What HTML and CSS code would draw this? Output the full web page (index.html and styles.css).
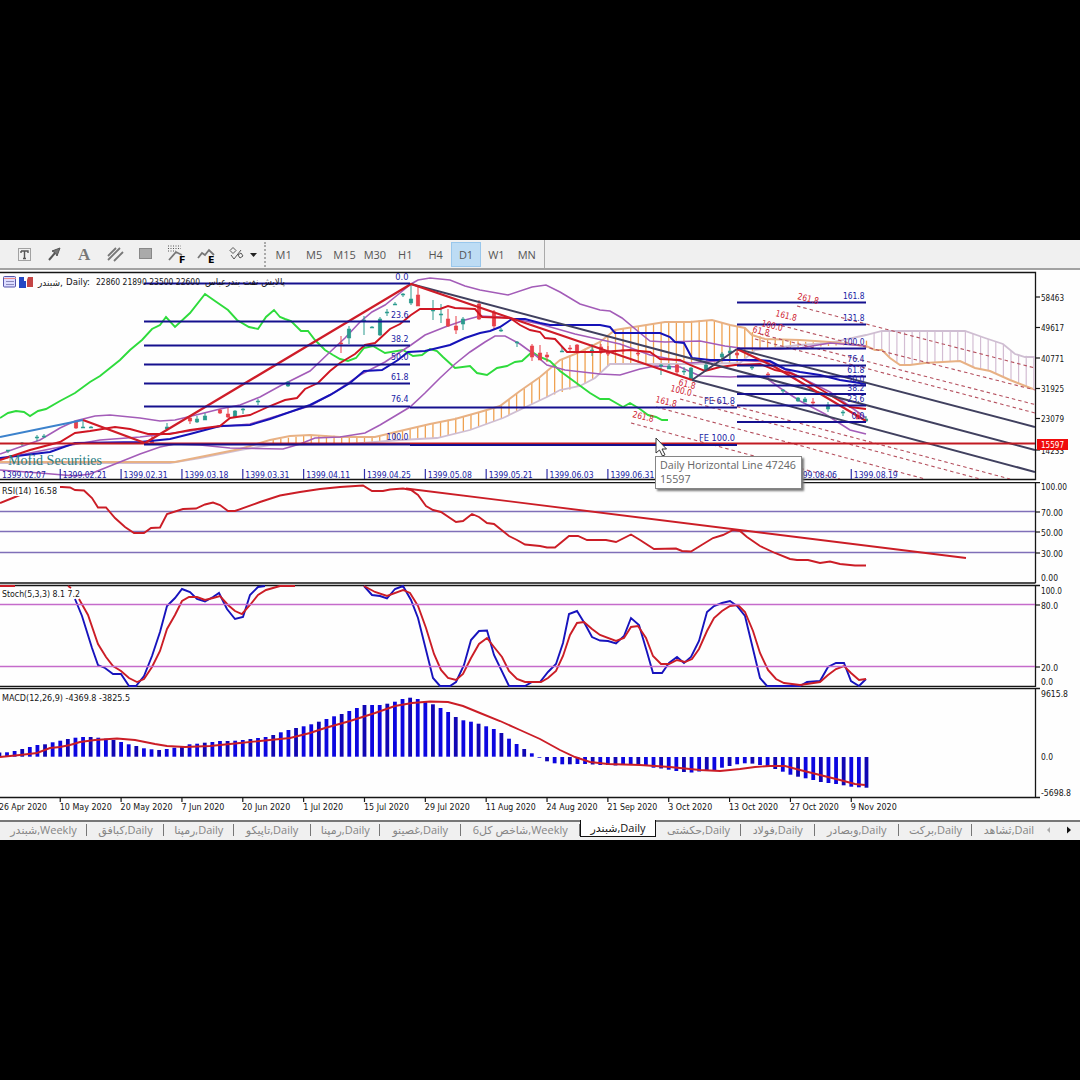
FILE: index.html
```html
<!DOCTYPE html>
<html lang="en">
<head>
<meta charset="utf-8">
<title>Daily chart</title>
<link rel="stylesheet" href="styles.css">
</head>
<body>
<main class="terminal">
  <header class="toolbar">
    <svg class="tools" viewBox="0 240 262 28">
      <g class="icon">
        <rect x="18.5" y="248.500" width="12" height="12" stroke-dasharray="1 1"/>
        <path d="M21 251h7v2M21 251v2M24.500 251v7M23 258.500h3" stroke-width="1.400"/>
        <path d="M49 260l6-7" stroke-width="2"/><path d="M52 251l8-3-3 8-1.500-3z" fill="#777"/>
        <path d="M108 256l8-8M108 260l12-12M114 261l9-9" stroke-width="1.800" stroke="#777"/>
        <rect x="139.500" y="248.500" width="12" height="10" fill="#aaa" stroke="#888"/>
        <path d="M168 246h13M168 248.500h13M168 251h8" stroke-dasharray="1 1.500"/>
        <path d="M169 260l7-8 6 3M198 258l4-5 3 2 4-5 5 5" stroke-width="1.800" stroke="#777"/>
        <path d="M230 250.500l3-3 3 3-3 3zM238 255l3-2 2 3-3 2zM231 255l3 4 7-9"/>
        <path d="M250 253h7l-3.500 4z" fill="#222" stroke="none"/>
      </g>
      <text class="serif-icon" x="78" y="260">A</text>
      <text class="icon-letter" x="179" y="263">F</text>
      <text class="icon-letter" x="208" y="263">E</text>
    </svg>
    <span class="grip"></span>
    <nav class="frames">
      <button>M1</button><button>M5</button><button>M15</button><button>M30</button><button>H1</button><button>H4</button><button class="on">D1</button><button>W1</button><button>MN</button>
    </nav>
  </header>

  <section class="charts">
    <svg class="panel" id="price" viewBox="0 270 1080 212">
      <defs><clipPath id="area"><rect x="0" y="273" width="1035" height="206"/></clipPath></defs>
      <path class="frame" d="M0 272.500H1035.500V479.500H0"/>
      <g clip-path="url(#area)">
        <g id="cloud"></g>
        <path class="span-b" d="M0 463L170 463L200 458L240 450L270 445L350 444L400 440L437 438L470 430L503 418L530 405L547 397L560 390L580 386L595 378L610 364L690 364L740 363L755 350L800 345L830 343L866 335L882 331L965 331L985 338L1003 344L1015 354L1025 357L1035 357"/>
        <path class="span-a" d="M0 462L175 462L200 457L240 449L270 440L290 436L310 435L340 437L375 437L400 431L430 424L455 419L480 412L500 406L520 391L540 377L560 360L580 352L600 342L615 330L640 326L665 322L690 322L712 320L730 325L745 328L752 335L765 339L800 340L830 342L866 346L875 350L882 350L890 358L900 365L910 365L925 363L960 361L975 368L990 371L1010 380L1033 389"/>
        <path class="chikou" d="M0 418L8 413L16 411L24 412L30 416L38 411L46 409L60 401L75 393L90 382L100 376L120 360L130 350L142 340L152 329L160 325L166 317L175 327L190 313L205 294L215 301L228 310L237 320L249 327L258 329L266 317L274 310L280 317L285 319L291 321L301 331L308 331L315 340L325 350L333 355L340 359L348 361L356 358L364 348L373 346L385 353L403 350L413 356L422 355L430 349L437 351L443 357L455 368L470 366L477 373L487 375L497 368L507 366L515 362L522 361L532 352L540 357L550 361L560 371L575 382L590 393L600 399L609 399L623 407L630 403L640 409L648 415L656 417L662 420L668 420"/>
        <g class="band">
          <path d="M0 454L20 447L40 440L60 428L75 421L95 416L110 415L140 418L160 421L175 420L200 414L220 409L240 405L260 397L280 386L310 371L330 352L345 338L360 322L372 312L385 305L400 293L411 284L418 280L430 278L450 280L465 286L480 290L508 295L532 287L546 285L560 292L580 304L600 310L610 311L622 318L640 333L650 341L665 342L700 341L725 346L740 348L780 349L800 348L830 343L866 346"/>
          <path d="M0 470L40 473L75 476L90 474L105 468L120 462L140 454L160 447L175 444L200 445L230 448L283 449L300 444L315 438L340 437L365 433L380 425L410 407L425 393L440 378L455 364L470 352L485 342L495 336L505 336L520 344L535 355L547 365L565 370L600 374L620 375L640 369L655 366L680 367L700 376L730 377L750 376L765 377L780 388L800 401L825 414L850 430L866 434"/>
          <path d="M0 459L60 447L100 440L140 437L190 431L215 427L250 424L290 412L310 406L335 392L360 375L385 362L411 345L425 335L445 327L465 320L480 316L500 317L520 320L540 324L575 334L620 344L650 355L690 363L730 360L770 362L800 377L830 392L866 418"/>
        </g>
        <g id="candles"></g>
        <path class="kijun" d="M0 458L50 452L75 443L140 442L170 439L190 434L220 426L250 425L270 419L290 412L310 405L330 395L350 383L364 371L382 370L398 360L408 352L425 351L450 345L465 338L480 333L490 331L500 327L512 319L525 319L540 323L550 325L600 325L610 327L615 333L660 333L670 337L675 342L684 343L692 358L710 360L760 360L770 361L785 369L800 372L820 375L840 380L866 384"/>
        <path class="tenkan" d="M0 460L30 450L60 442L75 433L90 431L115 427L130 429L148 434L170 434L190 430L220 426L230 418L250 415L270 406L285 400L297 398L305 389L318 383L330 371L340 363L355 354L365 345L375 343L390 329L400 324L411 315L420 309L440 309L448 306L455 308L475 309L482 317L510 318L520 325L530 330L540 332L545 338L555 339L567 352L600 352L630 350L650 352L660 359L680 360L690 365L705 371L720 367L735 365L760 364L775 370L790 373L800 377L830 395L850 407L866 409"/>
        <path class="start" d="M0 437L83 420"/>
        <path class="fork" d="M411 284L1035 450M737 349L1035 427M692 380L1035 472M692 380L737 349"/>
        <path class="channel" d="M797 306L1035 368M775 324L1035 390M760 334L1035 404.500M755 339L1035 413M693 395L1010 479M680 399L980 479M656 407L925 479M631 423L840 479"/>
        <path class="level" d="M0 443.500H1035"/>
        <path class="zigzag" d="M83 420L145 443L411 284L692 380M737 349L775 367L866 421"/>
        <path class="fib" d="M144 283.500H410M144 321.500H410M144 345.500H410M144 364.500H410M144 383.500H410M144 406.500H410M144 444.500H410M410 407.500H737M410 445H737M737 302.500H866M737 324.500H866M737 348.500H866M737 365.500H866M737 376.500H866M737 385.500H866M737 394H866M737 405.500H866M737 422H866"/>
      </g>
      <g class="books"><rect x="3.500" y="276.500" width="12" height="10.500" rx="1" fill="#dcdcff" stroke="#55a"/><path d="M4 278.500h12" stroke="#e88"/><path d="M6 281.500h8M6 284.500h8" stroke="#88b"/><path d="M19 277h5v4h2v7h-7z"/><path d="M27 280l1-3h5v10h-6z"/></g>
      <g id="title"></g>
      <text class="broker" x="8" y="465" textLength="94" lengthAdjust="spacingAndGlyphs">Mofid Securities</text>
      <g id="solar"></g>
      <g id="fibtext"></g>
      <g id="channeltext"></g>
      <g id="priceaxis"></g>
      <rect x="1037" y="439" width="31" height="11" fill="#f00b0b"/>
      <text class="current" x="1041" y="448" textLength="23" lengthAdjust="spacingAndGlyphs">15597</text>
    </svg>

    <svg class="panel" id="rsi" viewBox="0 482 1080 102">
      <path class="frame" d="M0 482.500H1040M1035.500 482V583M0 583H1035.500"/>
      <path class="mid" d="M0 511.500H1035M0 531.500H1035M0 552.500H1035"/>
      <path class="line-red" d="M0 503L20 495L50 487L62 487L70 487.500L75 490L84 490.500L92 498L98 507.500L106 507.500L115 518L125 527L134 533L144 533L151 528L160 527.500L167 514L183 509L196 508.500L205 504.500L213 502.500L220 505L228 511L235 511L260 502L280 495.500L300 492L320 489L340 487L363 485.500L372 491L383 491L390 489.500L403 488.500L411 490L418 495L426 506L433 510L441 512L456 522L463 521L472 514L479 517L487 523L494 524L509 536L517 540L525 544.500L540 546L547 547.500L555 547.500L569 536L578 536L587 540L606 540L616 542L631 534.500L640 540L654 549L676 548.500L682 551L691 551.500L700 546L713 538L723 535L733 530L740 531L747 537L760 546L775 553L790 559L797 560L808 560L820 563L830 561.500L840 564L855 565.500L866 565.500M406 488.500L966 558"/>
      <rect x="2" y="484" width="58" height="12" fill="#fff"/>
      <g id="rsiaxis"></g>
    </svg>

    <svg class="panel" id="stoch" viewBox="0 584 1080 103">
      <path class="frame" d="M0 585.500H1040M1035.500 585V687M0 686.500H1035.500"/>
      <path class="line-blue" d="M75 599L82 616L92 648L98 665L105 668L113 674L121 674L129 686L136 686L144 676L152 656L160 632L167 606L175 598L182 589L190 592L197 599L205 601.500L213 597L219 593L227 609L235 619L243 617L250 595L258 587L265 586M364 586L372 595L380 596L387 598.500L395 589L403 586L411 600L418 618L426 650L433 678L440 686L450 686L456 682L464 665L471 640L479 631L487 630.500L494 655L509 686L525 686L532 682L540 682L548 672L556 664L563 643L569 614L577 611L585 624L592 637L600 640.500L608 641L616 643.500L624 636L631 618L639 625L647 652L653 673L662 673L669 663L677 657L684 663L691 657L699 641L707 612L714 606L722 603L730 601L737 606L745 616L753 649L760 678L767 686L800 686L807 682L820 681L828 667L836 663L844 663L851 681L859 686L866 679"/>
      <path class="line-red" d="M0 586L15 586M68 586L71 588M79 599L88 615L98 644L106 657L113 666L121 671L129 678L137 682L144 679L152 667L160 651L167 629L175 615L182 601L189 597L197 597L205 600L213 598L220 596L228 605L235 611L242 614L250 605L258 595L266 590L280 586L295 586M364 586L375 592L387 596L403 590L410 593L418 606L426 628L434 654L441 670L448 678L456 680L463 674L471 658L479 644L487 638L494 647L502 657L509 671L517 679L525 682L541 682L548 678L556 671L563 656L570 635L577 623L584 622L592 629L600 635L616 641L624 638L631 627L638 626L646 638L653 656L661 664L669 664L677 660L685 662L692 659L699 649L707 631L714 618L722 611L730 606L738 605L745 612L753 631L760 653L768 670L776 679L784 683L800 685L820 682L828 675L836 669L844 666L851 673L859 680L866 679"/>
      <path class="bound" d="M0 604.500H1035M0 666.500H1035"/>
      <g id="stochaxis"></g>
    </svg>

    <svg class="panel" id="macd" viewBox="0 687 1080 133">
      <path class="frame" d="M0 688.500H1040M1035.500 688V798M0 797.500H1040"/>
      <g id="bars"></g>
      <path class="line-red" d="M0 757L20 755L37 753L50 748L60 747L70 745L80 742L95 740L117 738.500L135 740L155 744L167 746L185 747L210 746L240 743L260 741L290 738L310 733L325 728L350 721L375 713L395 706L412 703L430 701.500L448 702L463 706L480 713L500 721L520 730L540 739L560 750L575 757L590 762L608 764L640 765L670 767L700 770L720 771L740 769L755 767L770 766L785 766L800 770L820 775L840 780L855 784L865 785"/>
      <g id="macdaxis"></g>
    </svg>
    <svg class="pointer" viewBox="0 0 12 20"><path d="M1 1v15l3.500-3 3 6 2.500-1.200-3-5.800h4.500z"/></svg>
    <div class="tooltip">Daily Horizontal Line 47246<br>15597</div>
  </section>

  <footer class="tabs">
    <span>شبندر,Weekly</span><span>کبافق,Daily</span><span>رمپنا,Daily</span><span>تاپیکو,Daily</span><span>رمپنا,Daily</span><span>غصینو,Daily</span><span>شاخص کل6,Weekly</span><span class="active">شبندر,Daily</span><span>حکشتی,Daily</span><span>فولاد,Daily</span><span>وبصادر,Daily</span><span>برکت,Daily</span><span class="cut">ثشاهد,Dail</span>
    <svg class="arrows" viewBox="0 0 40 18"><path d="M10 5v6l-3-3z" fill="#aaa"/><path d="M27 4.500v7l4-3.500z" fill="#111"/></svg>
  </footer>
</main>
<script src="chart.js"></script>
</body>
</html>
```

FILE: styles.css
```css
body { margin: 0; background: #000; font-family: "Open Sans", "DejaVu Sans", sans-serif; }
.terminal { width: 1080px; height: 600px; margin-top: 240px; display: flex; flex-direction: column; background: #fefefe; overflow: hidden; }
.toolbar { height: 28px; flex: none; display: flex; align-items: center; background: #f0f0f0; border-bottom: 2px solid #a2a2a2; }
.tools { width: 262px; height: 28px; }
.icon { fill: none; stroke: #555; }
.serif-icon { font: bold 17px "Liberation Serif", serif; fill: #777; }
.icon-letter { font: bold 9.5px "DejaVu Sans", sans-serif; fill: #000; }
.grip { width: 1px; height: 25px; margin: 0 3px 0 2px; border-left: 2px dotted #aaa; }
.frames { display: flex; height: 28px; align-items: center; border-right: 1px solid #aaa; }
.frames button { width: 30.400px; height: 25px; padding: 0 3px 0 0; border: 0; background: none; font: 11px "Open Sans", sans-serif; color: #555; }
.frames .on { padding: 0; margin-left: -1px; width: 29.400px; margin-right: 2px; background: #bddcf4; border: 1px solid #99c7ec; }
.charts { position: relative; height: 550px; flex: none; display: flex; flex-direction: column; }
.panel { width: 1080px; display: block; flex: none; overflow: hidden; }
.panel path { fill: none; }
.panel text { font: 9.500px "DejaVu Sans Condensed", "DejaVu Sans", sans-serif; fill: #151515; }
.panel .frame { stroke: #161616; stroke-width: 1.300; }
.panel .books path:nth-of-type(3) { fill: #2447c4; }
.panel .books path:nth-of-type(4) { fill: #c44545; }
.span-a { stroke: #e8b184; stroke-width: 2; }
.span-b { stroke: #cfbed2; stroke-width: 1.800; }
.chikou { stroke: #2edb3c; stroke-width: 1.900; }
.band { stroke: #a35cb8; stroke-width: 1.600; }
.kijun { stroke: #1512b8; stroke-width: 2; }
.tenkan { stroke: #cf1522; stroke-width: 1.900; }
.start { stroke: #3c82cc; stroke-width: 2; }
.fork { stroke: #40405f; stroke-width: 2; }
.channel { stroke: #b5505e; stroke-width: 1.100; stroke-dasharray: 3.500 3; }
.level { stroke: #c11a22; stroke-width: 2; }
.zigzag { stroke: #ce1c28; stroke-width: 2.200; }
.fib { stroke: #15108e; stroke-width: 2; }
.mid { stroke: #7f6fb8; stroke-width: 1.600; }
.bound { stroke: #c56bcb; stroke-width: 1.600; }
.line-red { stroke: #cb1d26; stroke-width: 1.900; }
.line-blue { stroke: #1713bd; stroke-width: 1.900; }
.bar { fill: #0c06e0; }
.bar.deep { fill: #1006b4; }
.hatch-up { stroke: #efa150; stroke-width: 1.300; }
.hatch-down { stroke: #d3bdd3; stroke-width: 1.200; }
.rise { stroke: #2b9a8e; fill: #2b9a8e; }
.fall { stroke: #e8404a; fill: #e8404a; }
.tick { stroke: #161616; stroke-width: 1.200; }
.tick.navy { stroke: #3030a8; }
.panel .navytext { fill: #201ca4; }
.panel .redtext { fill: #cf2230; font-size: 9px; }
.panel .current { fill: #fff; }
.panel .broker { font: 14px "Liberation Serif", serif; fill: #2c7f85; }
.pointer { position: absolute; left: 655px; top: 167px; width: 12px; height: 20px; fill: #fff; stroke: #333; }
.tooltip { position: absolute; left: 655px; top: 186px; width: 141px; height: 30px; padding: 1px 0 0 4px; border: 1px solid #858585; background: #fff; box-shadow: 2px 2px 2px #777; font-size: 10.700px; line-height: 14px; color: #666; white-space: nowrap; }
.tabs { box-sizing: border-box; height: 20px; flex: none; display: grid; grid-template-columns: 87px 77px 69.500px 77px 69.500px 80.500px 119.500px 76px 85px 73.500px 84.500px 73px 68px 40px; background: #f0f0f0; border-top: 2px solid #777; font-size: 11px; line-height: 15px; color: #858585; direction: ltr; }
.tabs span { position: relative; text-align: center; white-space: nowrap; overflow: hidden; }
.tabs span::after { content: ""; position: absolute; right: 0; top: 2px; height: 12px; border-right: 1px solid #777; }
.tabs .active { height: 16px; margin-top: -2px; background: #fff; border: 1px solid #111; border-top: 0; color: #111; }
.tabs .active::after, .tabs .cut::after { display: none; }
.tabs .cut { padding-left: 6px; }
.arrows { width: 40px; height: 18px; }
```

FILE: chart.js
```javascript
(() => {
const NS = "http://www.w3.org/2000/svg";
function add(parent, tag, attrs, text) {
  const el = document.createElementNS(NS, tag);
  for (const key in attrs) el.setAttribute(key, attrs[key]);
  if (text !== undefined) el.textContent = text;
  document.getElementById(parent).appendChild(el);
  return el;
}
function label(parent, x, y, width, text, cls = "") {
  add(parent, "text", { x, y, textLength: width, lengthAdjust: "spacingAndGlyphs", class: cls }, text);
}
const barX = i => -0.6 + i * 7.606;

// MACD histogram: one value per candle, as the end of each bar
const macd = [752.5,752.3,751,749,747,745,744.3,742.3,740.7,739,737.7,737,737,737.7,738.7,740,742,744.3,746,748.3,749.3,750,749,747.7,746,744.3,743.7,742.7,742,741,741,740.7,740,739,738,737,735,732.3,730,728,726.3,724.3,721.7,719,716.3,714,711,708,705,705,705,703.7,701.7,699,697.7,699,701,704.3,708,712,717,720.3,721.7,723.7,726.3,729,733,738.7,744,749,753.3,757,761.3,763.3,764.3,764.3,764,764,764.5,765,765,765.5,765,765,765,765.3,767.7,768.5,769.7,771,772,772.5,771.5,770.5,770,767.7,766,764.3,763.3,763.6,765,766.3,769,771.7,774.7,776.7,778.3,780,782,783,784,785.3,786.7,787.3,787.7];
macd.forEach((end, i) => {
  const up = end <= 757;
  add("bars", "rect", { x: barX(i) - 1.9, y: up ? end : 757, width: 3.8, height: Math.max(.7, up ? 756.7 - end : end - 757), class: i % 3 ? "bar" : "bar deep" });
});

// Cloud hatching between the two leading spans
const spanTop = [[270,440],[310,435],[375,437],[430,424],[480,412],[500,406],[540,377],[560,360],[600,342],[615,330],[665,322],[712,320],[745,328],[765,339],[866,346],[867,335],[882,331],[965,331],[1003,344],[1015,354],[1035,357]];
const spanLow = [[270,445],[350,444],[437,438],[470,430],[503,418],[547,397],[580,386],[595,378],[610,364],[740,363],[755,350],[866,344],[867,347],[882,350],[900,365],[960,361],[975,368],[990,371],[1033,389]];
function at(points, x) {
  for (let i = 1; i < points.length; i++) if (x <= points[i][0]) {
    const a = points[i - 1], b = points[i];
    return a[1] + (b[1] - a[1]) * (x - a[0]) / (b[0] - a[0]);
  }
  return points[points.length - 1][1];
}
for (let i = 36; i < 137; i++) {
  const x = barX(i);
  add("cloud", "path", { d: `M${x} ${at(spanTop, x)}V${at(spanLow, x)}`, class: x < 867 ? "hatch-up" : "hatch-down" });
}

// x, high, low, body top, body height, rising
[[8,450,453,450,1,1],[22,442,446,443,1,1],[37,435,441,437,1,1],[44,434,438,436,1,1],[76,422,429,422,6,0],[83,420,428,427,1,1],[91,426,428,427,1,1],[152,436,444,440,3,0],[167,423,430,427,2,1],[190,415,424,418,3,0],[197,416,423,419,3,1],[205,413,420,416,4,1],[220,409,414,410,3,0],[228,408,418,414,3,0],[235,410,418,411,6,1],[243,408,414,409,1,1],[258,399,405,401,1,1],[288,381,387,382,4,1],[341,336,353,343,1,0],[349,326,344,329,9,1],[364,316,335,320,1,1],[372,326,328,327,1,1],[380,317,336,319,16,1],[387,309,316,312,1,1],[395,302,305,304,1,1],[403,293,297,294,1,1],[411,284,305,299,4,1],[418,287,306,295,11,0],[433,300,320,310,1,1],[441,304,323,314,1,1],[448,309,327,319,7,0],[456,316,334,326,4,0],[463,317,330,319,5,1],[479,300,320,304,15,0],[494,310,329,312,14,0],[501,328,332,330,1,1],[517,341,347,342,1,1],[532,344,361,346,11,0],[540,345,360,353,7,0],[547,352,362,355,2,0],[562,346,352,351,1,1],[570,345,352,348,1,0],[577,344,354,345,7,0],[592,344,356,350,2,1],[601,344,354,347,5,0],[608,346,356,352,2,0],[623,345,354,350,1,0],[638,350,356,353,1,0],[661,364,375,365,1,1],[669,364,369,366,3,1],[677,364,375,365,7,0],[684,367,375,371,1,1],[691,367,380,368,11,1],[706,363,371,365,5,1],[722,352,361,354,3,1],[730,347,359,351,2,1],[737,350,358,353,2,0],[752,366,370,367,1,1],[768,372,379,374,1,0],[783,389,393,390,1,1],[798,397,402,398,3,1],[805,397,402,399,3,1],[813,398,405,402,1,0],[828,402,412,405,4,1],[843,410,416,412,1,1],[858,412,419,415,4,0],[866,416,422,419,2,1]].forEach(([x, high, low, y, height, up]) => {
  const cls = up ? "rise" : "fall";
  add("candles", "path", { d: `M${x} ${high}V${low}`, class: cls, "stroke-width": 1 });
  add("candles", "rect", { x: x - 1.8, y, width: 3.6, height, class: cls, "stroke-width": .5 });
});

// Indicator captions
label("title", 38, 286, 25, "شبندر,");
label("title", 66, 285, 24, "Daily:");
label("title", 96, 285, 104, "22860 21890 23500 22600");
label("title", 205, 285, 80, "پالایش نفت بندرعباس");
label("rsiaxis", 2, 493.5, 55, "RSI(14) 16.58");
label("stochaxis", 2, 597, 78, "Stoch(5,3,3) 8.1 7.2");
label("macdaxis", 2, 701, 128, "MACD(12,26,9) -4369.8 -3825.5");

// Axis scales
[["58463",297],["49617",327.5],["40771",358],["31925",388.5],["23079",418.5],["14233",450]].forEach(([t, y]) => {
  add("priceaxis", "path", { d: `M1035 ${y}h5`, class: "tick" });
  label("priceaxis", 1041, y + 3.5, 23, t);
});
[["rsiaxis","100.00",486.5,26],["rsiaxis","70.00",512,22],["rsiaxis","50.00",532,22],["rsiaxis","30.00",553,22],["rsiaxis","0.00",577.5,17],["stochaxis","100.0",590.5,21],["stochaxis","80.0",605,17],["stochaxis","20.0",667,17],["stochaxis","0.0",681.5,12],["macdaxis","9615.8",693.5,27],["macdaxis","0.0",756.5,12],["macdaxis","-5698.8",792.5,30]].forEach(([g, t, y, w]) => {
  if (/^[78532]0/.test(t)) add(g, "path", { d: `M1035 ${y}h5`, class: "tick" });
  label(g, 1041, y + 3.5, w, t);
});

// Two calendars share the same eight-candle grid
[["26 Apr 2020",48],["10 May 2020",52],["20 May 2020",52],["7 Jun 2020",43],["20 Jun 2020",48],["1 Jul 2020",40],["15 Jul 2020",45],["29 Jul 2020",45],["11 Aug 2020",50],["24 Aug 2020",51],["21 Sep 2020",50],["3 Oct 2020",44],["13 Oct 2020",49],["27 Oct 2020",49],["9 Nov 2020",46]].forEach(([t, w], i) => {
  const x = barX(i * 8);
  add("macdaxis", "path", { d: `M${x} 798v4`, class: "tick" });
  label("macdaxis", i ? x - .5 : -1, 810, w, t);
});
["02.07","02.21","02.31","03.18","03.31","04.11","04.25","05.08","05.21","06.03","06.31","07.13","07.26","08.06","08.19"].forEach((t, i) => {
  const x = barX(i * 8);
  add("solar", "path", { d: `M${x} 469v10`, class: "tick navy" });
  label("solar", x + 2.5, 478, 44, "1399." + t, "navytext");
});

// Fibonacci captions
[["0.0",279.5],["23.6",318],["38.2",341.5],["50.0",360],["61.8",379.5],["76.4",402],["100.0",440]].forEach(([t, y]) => {
  const w = t.length * 4.4; label("fibtext", 408.5 - w, y, w, t, "navytext");
});
[["161.8",299],["131.8",321],["100.0",344.5],["76.4",361.5],["61.8",373],["50.0",382],["38.2",390.5],["23.6",401.5],["0.0",418.5]].forEach(([t, y]) => {
  const w = t.length * 4.3; label("fibtext", 864.5 - w, y, w, t, "navytext");
});
label("fibtext", 704, 404, 31, "FE 61.8", "navytext");
label("fibtext", 699, 441, 36, "FE 100.0", "navytext");
[["261.8",797,299],["161.8",775,316],["100.0",761,326],["61.8",752,332],["61.8",678,385],["100.0",670,391],["161.8",655,402],["261.8",632,417]].forEach(([t, x, y]) => {
  add("channeltext", "text", { x, y, transform: `rotate(14 ${x} ${y})`, textLength: t.length * 4.3, lengthAdjust: "spacingAndGlyphs", class: "redtext" }, t);
});
})();
```
